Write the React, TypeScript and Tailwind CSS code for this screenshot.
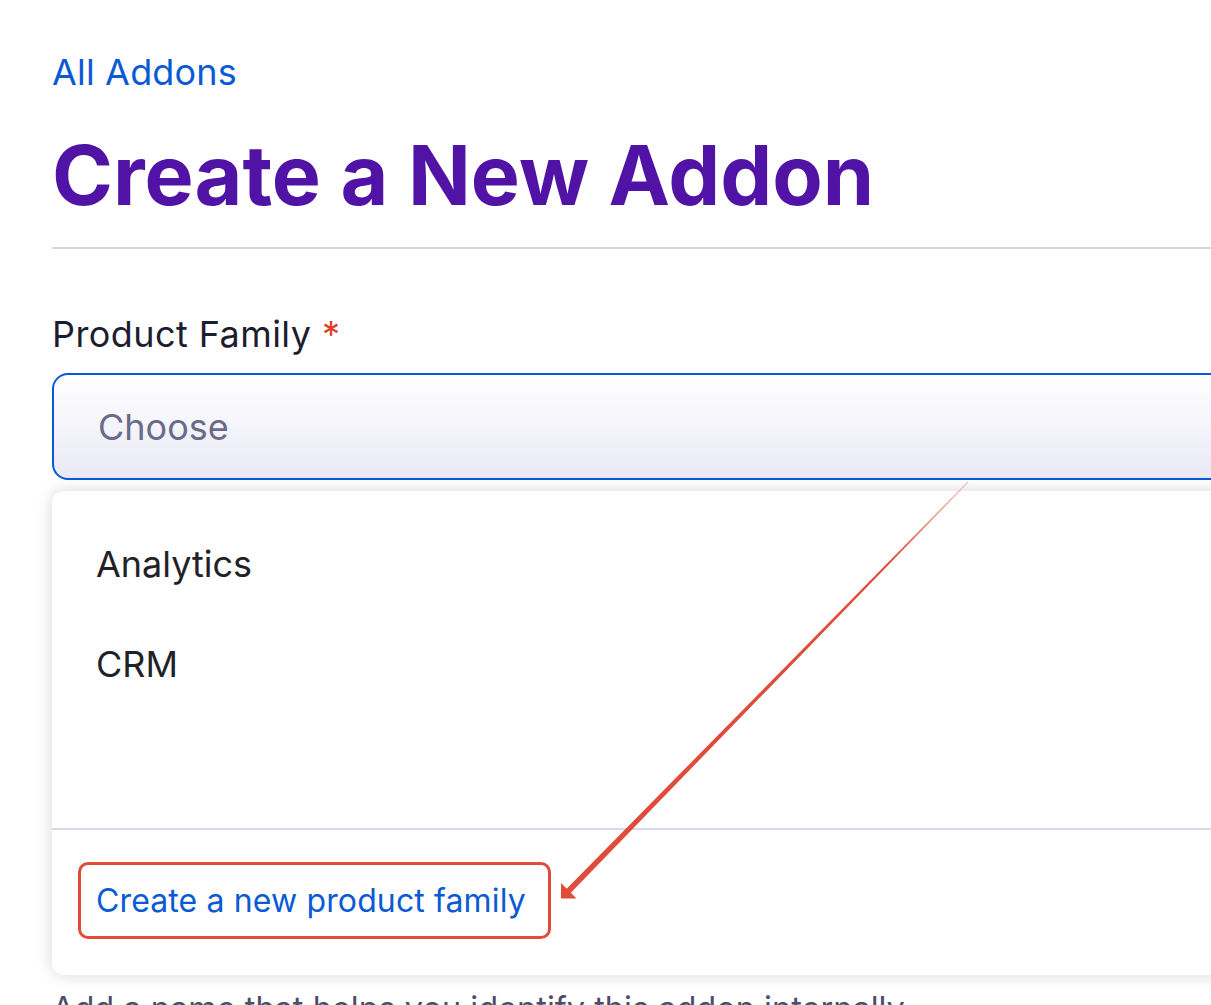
import React from "react";

export default function App() {
  return (
    <div className="relative w-[1211px] h-[1005px] overflow-hidden bg-white font-['Inter',sans-serif]">
      <div className="w-[1500px] pl-[52px] pt-[50px]">
        <a className="block text-[36px] leading-[44px] tracking-[0.005em] text-[#0a5bd3]">All Addons</a>
        <h1 className="mt-[36px] text-[82.5px] leading-[90px] font-bold text-[#5013a6]">
          Create a New Addon
        </h1>
        <div className="mt-[27px] h-[2px] bg-[#d6d6d6]" />

        <div className="mt-[63px] text-[36px] leading-[44px] tracking-[0.012em] text-[#1d1d30]">
          Product Family <span className="text-[#e0402a]">*</span>
        </div>

        <div className="mt-[17px] h-[107px] flex items-center rounded-[16px] border-2 border-[#0a58d6] bg-gradient-to-b from-[#ffffff] to-[#e9e9f6] pl-[44px]">
          <span className="text-[36px] leading-[44px] text-[#6a6a8a]">Choose</span>
        </div>

        <div className="mt-[11px] rounded-[12px] bg-white shadow-[0_0_16px_rgba(0,0,0,0.16)]">
          <div className="h-[337px] pt-[23px] pl-[44px]">
            <div className="h-[100px] flex items-center text-[36px] leading-[44px] text-[#222226]">Analytics</div>
            <div className="h-[100px] flex items-center text-[36px] leading-[44px] text-[#222226]">CRM</div>
          </div>
          <div className="h-[2px] bg-[#d9d9ee]" />
          <div className="h-[145px] pt-[32px] pl-[26px]">
            <div className="w-[473px] h-[77px] flex items-center rounded-[10px] border-[3px] border-[#e04b3a] pl-[15px]">
              <a className="text-[32px] leading-[40px] tracking-[0.004em] text-[#0a5bd3]">Create a new product family</a>
            </div>
          </div>
        </div>

        <p className="mt-[12px] text-[32.5px] leading-[44px] text-[#4d4d6a]">
          Add a name that helps you identify this addon internally.
        </p>
      </div>

      <svg className="absolute left-0 top-0 pointer-events-none" width="1211" height="1005" viewBox="0 0 1211 1005">
        <defs>
          <linearGradient id="arrowFade" x1="968" y1="482" x2="568" y2="891" gradientUnits="userSpaceOnUse">
            <stop offset="0" stopColor="#e04b3a" stopOpacity="0.3" />
            <stop offset="0.2" stopColor="#e04b3a" stopOpacity="1" />
            <stop offset="1" stopColor="#e04b3a" stopOpacity="1" />
          </linearGradient>
        </defs>
        <polygon points="968.4,482.4 570.6,892.9 566.4,889.1 967.6,481.6" fill="url(#arrowFade)" />
        <polygon points="561,883 561,898.5 576.5,898.5" fill="#e04b3a" />
      </svg>
    </div>
  );
}
